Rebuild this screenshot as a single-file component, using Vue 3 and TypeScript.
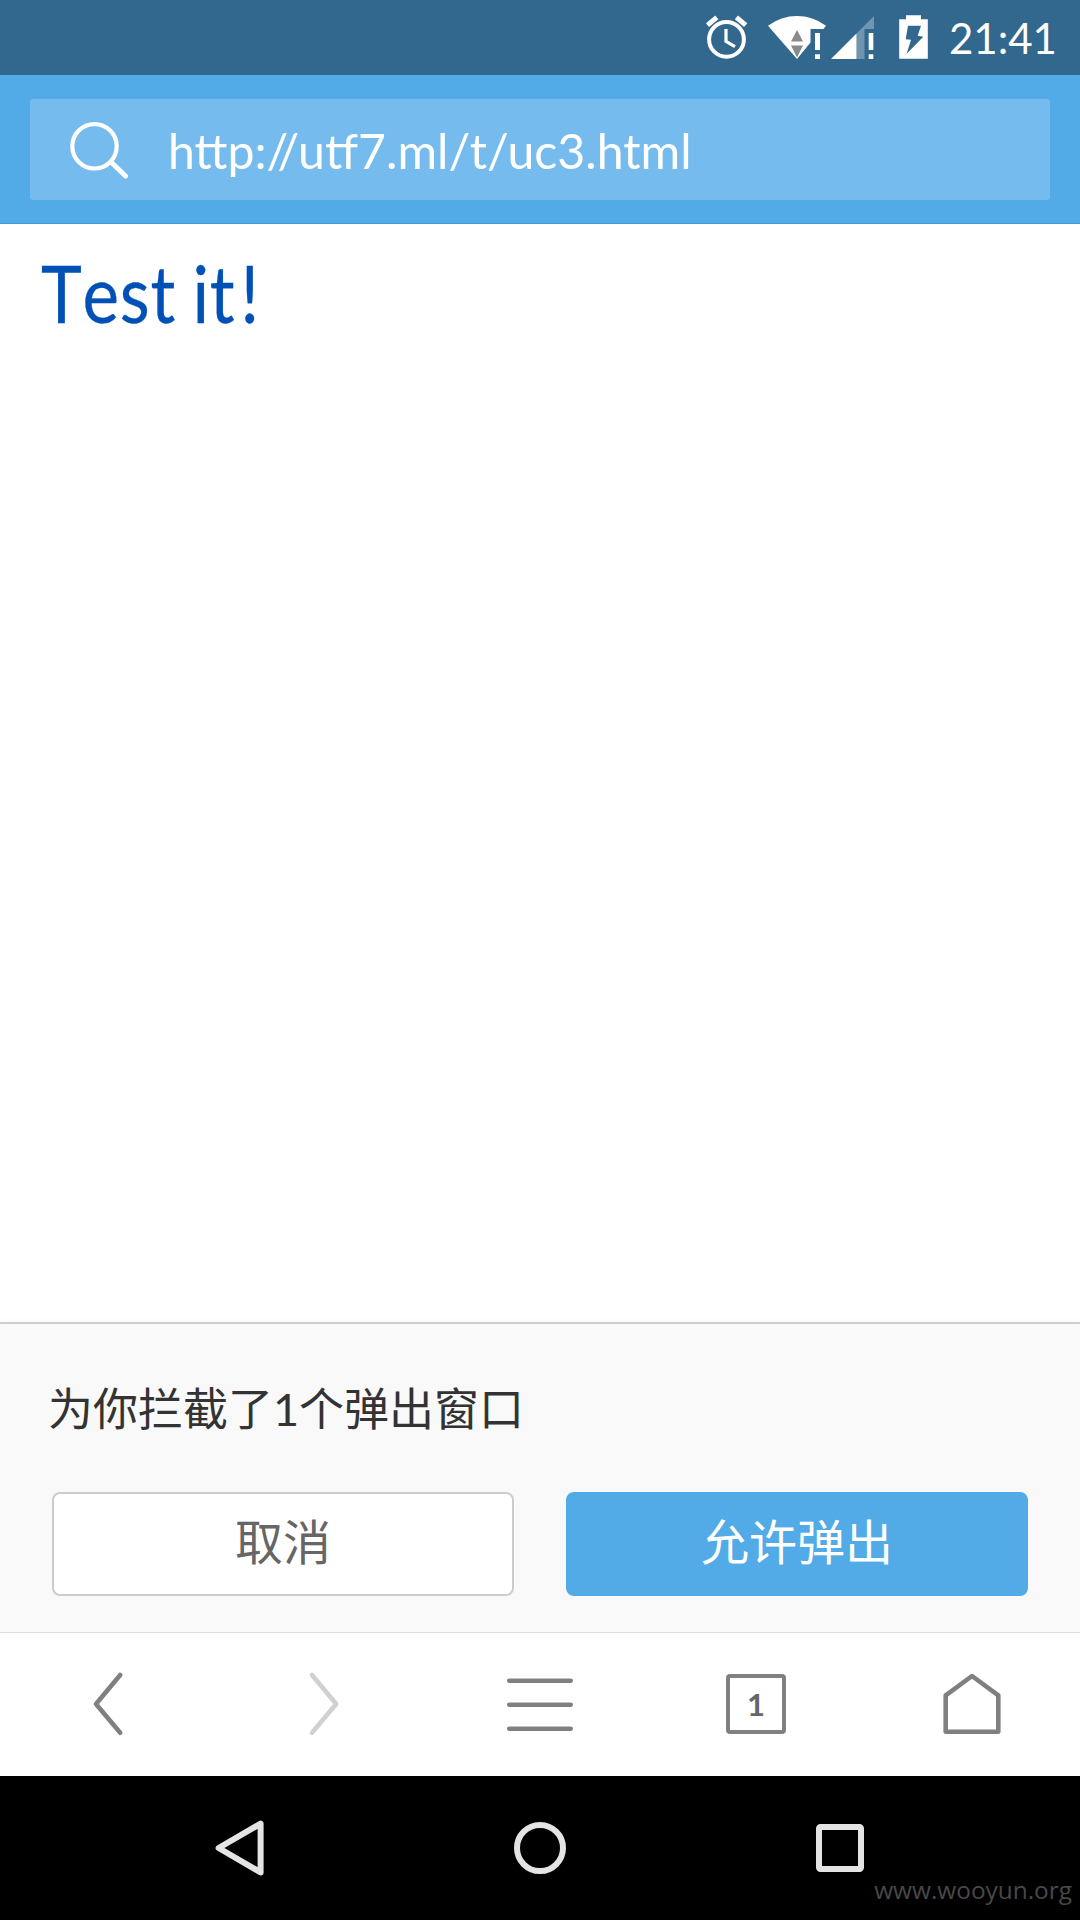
<script setup lang="ts">
import { ref } from 'vue'

const clock = ref<string>('21:41')
const address = ref<string>('http://utf7.ml/t/uc3.html')
const tabCount = ref<number>(1)
const blockedCount = ref<number>(1)
</script>

<template>
  <div class="phone">
    <header class="status">
      <svg class="alarm" width="42" height="46" viewBox="706 15 42 46" fill="none" stroke="#fff">
        <circle cx="726.5" cy="39.4" r="17.4" stroke-width="4" />
        <path d="M726 29v12.3l9 5.4" stroke-width="3.2" />
        <path d="M707.5 25.2l9.3-7.8M745.7 25.2l-9.3-7.8" stroke-width="5" />
      </svg>
      <svg class="wifi" width="58" height="46" viewBox="768 15 58 46" fill="#fff">
        <path d="M768 25.7Q781 16 797 16T826 25.7L823.5 29H810.5V42.5L797 59Z" />
        <path d="M797 30l6 11.5h-12zM791 45.5h12l-6 12z" fill="#8a8a8a" />
        <path d="M815 33h5v17h-5zM815 54.3h5V59h-5z" />
      </svg>
      <svg class="signal" width="44" height="46" viewBox="831 15 44 46" fill="#fff">
        <path d="M831 59L856.5 33.5V59Z" />
        <path d="M856.5 33.5L874 16V29H864.5V59H856.5Z" fill-opacity=".3" />
        <path d="M868.7 33h4.6v17h-4.6zM868.7 54.3h4.6V59h-4.6z" />
      </svg>
      <svg class="battery" width="29" height="46" viewBox="899 15 29 46" fill="#fff">
        <path
          fill-rule="evenodd"
          d="M906 15.3h15v4h6.8v39.5H899.2V19.3h6.8zM908 25.7h13l-3.3 10 5.6 1-16.6 17 4.3-14-5.3-.4z"
        />
      </svg>
      <span class="clock">{{ clock }}</span>
    </header>

    <div class="topbar">
      <div class="search">
        <svg width="60" height="60" viewBox="68 119.5 60 60" fill="none" stroke="#fff">
          <circle cx="94.5" cy="145.8" r="22.2" stroke-width="4.2" />
          <path d="M111 161.5L125.5 175.5" stroke-width="5" stroke-linecap="round" />
        </svg>
        <span class="address">{{ address }}</span>
      </div>
    </div>

    <main class="page"><a class="link">Test it<span class="mark">!</span></a></main>

    <section class="prompt">
      <p class="message">为你拦截了{{ blockedCount }}个弹出窗口</p>
      <div class="actions">
        <button class="btn cancel">取消</button>
        <button class="btn allow">允许弹出</button>
      </div>
    </section>

    <nav class="tools">
      <div class="tool">
        <svg width="80" height="80" viewBox="68 1664 80 80">
          <path d="M120.2 1675L96 1704L120.2 1732.7" />
        </svg>
      </div>
      <div class="tool disabled">
        <svg width="80" height="80" viewBox="284 1664 80 80">
          <path d="M312 1675L336.2 1704L312 1732.7" />
        </svg>
      </div>
      <div class="tool">
        <svg width="80" height="80" viewBox="500 1664 80 80">
          <path d="M509.3 1680.7H570.7M509.3 1704.7H570.7M509.3 1728.7H570.7" />
        </svg>
      </div>
      <div class="tool">
        <span class="tabs">{{ tabCount }}</span>
      </div>
      <div class="tool">
        <svg width="80" height="80" viewBox="932 1664 80 80">
          <path d="M972 1676L998.3 1695.3V1731.7H945.7V1695.3Z" />
        </svg>
      </div>
    </nav>

    <footer class="system">
      <svg width="60" height="60" viewBox="210 1818 60 60">
        <path d="M260.6 1823.6V1872.4L218.6 1848Z" />
      </svg>
      <svg width="60" height="60" viewBox="510 1818 60 60">
        <circle cx="540" cy="1848" r="23" />
      </svg>
      <svg width="60" height="60" viewBox="810 1818 60 60">
        <rect x="819" y="1827" width="42" height="42" rx="1.5" />
      </svg>
      <span class="watermark">www.wooyun.org</span>
    </footer>
  </div>
</template>

<style>
body {
  margin: 0;
}
</style>

<style scoped>
.phone {
  width: 1080px;
  height: 1920px;
  display: flex;
  flex-direction: column;
  overflow: hidden;
  background: #fff;
  font-family: Lato, "Noto Sans CJK SC", sans-serif;
}
svg {
  display: block;
  flex: none;
}
.status {
  flex: none;
  height: 75px;
  box-sizing: border-box;
  padding: 15px 25px 0 0;
  display: flex;
  justify-content: flex-end;
  align-items: flex-start;
  background: #32688d;
  color: #fff;
}
.alarm {
  margin-right: 20px;
}
.wifi {
  margin-right: 5px;
}
.signal {
  margin-right: 24px;
}
.battery {
  margin-right: 21px;
}
.clock {
  width: 106px;
  font-size: 42px;
  line-height: 46px;
  white-space: nowrap;
}
.topbar {
  flex: none;
  height: 149px;
  box-sizing: border-box;
  padding: 24px 30px;
  background: #52abe6;
  border-bottom: 1px solid #3c9bd8;
}
.search {
  height: 101px;
  display: flex;
  align-items: center;
  padding-left: 38px;
  border-radius: 3px;
  background: #75bbed;
  color: #fff;
}
.address {
  margin-left: 40px;
  padding-top: 1px;
  font-size: 48.2px;
  line-height: 60px;
  white-space: nowrap;
}
.page {
  flex: 1;
  padding: 21px 41px;
}
.link {
  display: block;
  color: #0050b6;
  font-size: 79.5px;
  line-height: 96px;
  font-kerning: none;
  letter-spacing: 0.8px;
  word-spacing: -2px;
  -webkit-text-stroke: 0.3px #0050b6;
  transform: scaleX(0.87);
  transform-origin: left;
}
.mark {
  margin-left: 6px;
}
.prompt {
  flex: none;
  height: 311px;
  box-sizing: border-box;
  padding: 52px 52px 0;
  background: #f9f9f9;
  border-top: 2px solid #cecece;
  border-bottom: 1px solid #dedede;
  box-shadow: 0 -1px 5px rgba(0, 0, 0, 0.03);
}
.message {
  margin: 0 0 0 -4px;
  height: 116px;
  color: #333;
  font-size: 45px;
  line-height: 66px;
}
.actions {
  display: flex;
  gap: 52px;
}
.btn {
  flex: 1;
  height: 104px;
  padding: 0 0 5px;
  border: 2px solid #ccc;
  border-radius: 8px;
  font: inherit;
  font-size: 48px;
  line-height: 60px;
}
.cancel {
  background: #fff;
  color: #666;
}
.allow {
  background: #52abe6;
  border-color: #52abe6;
  color: #fff;
}
.tools {
  flex: none;
  height: 143px;
  box-sizing: border-box;
  padding-bottom: 1px;
  display: flex;
  background: #fff;
}
.tool {
  flex: 1;
  display: flex;
  align-items: center;
  justify-content: center;
  fill: none;
  stroke: #808080;
  stroke-width: 4.6;
  stroke-linecap: round;
  stroke-linejoin: round;
}
.disabled {
  stroke: #d0d0d0;
}
.tabs {
  width: 60px;
  height: 60px;
  box-sizing: border-box;
  border: 4px solid #808080;
  border-radius: 4px;
  color: #666;
  font-size: 31px;
  font-weight: 700;
  line-height: 52px;
  text-align: center;
}
.system {
  flex: none;
  height: 144px;
  position: relative;
  display: flex;
  align-items: center;
  justify-content: center;
  gap: 240px;
  background: #000;
  fill: none;
  stroke: #e4e4e4;
  stroke-width: 6;
  stroke-linejoin: round;
}
.watermark {
  position: absolute;
  right: 8px;
  bottom: 12px;
  color: #484848;
  font-family: "Open Sans", sans-serif;
  font-size: 24.4px;
  line-height: 36px;
}
</style>
